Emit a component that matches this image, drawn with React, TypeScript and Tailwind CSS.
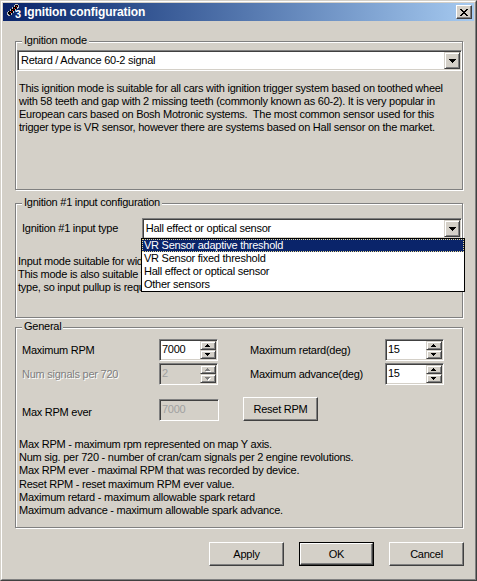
import React from "react";

const sunken =
  "border border-t-[#808080] border-l-[#808080] border-r-white border-b-white shadow-[inset_1px_1px_0_#404040,inset_-1px_-1px_0_#d4d0c8]";
const raised =
  "border border-t-white border-l-white border-r-[#404040] border-b-[#404040] shadow-[inset_-1px_-1px_0_#808080]";
const scrollBtn =
  "border border-t-[#d4d0c8] border-l-[#d4d0c8] border-r-[#404040] border-b-[#404040] shadow-[inset_1px_1px_0_#fff,inset_-1px_-1px_0_#808080] bg-[#d4d0c8]";
const etched = "relative border border-[#808080] shadow-[1px_1px_0_#fff,inset_1px_1px_0_#fff]";

function DownArrow() {
  return (
    <svg width="7" height="4" viewBox="0 0 7 4" shapeRendering="crispEdges">
      <path d="M0 0h7v1H0zM1 1h5v1H1zM2 2h3v1H2zM3 3h1v1H3z" fill="#000" />
    </svg>
  );
}

function SpinArrow({ up, disabled }: { up?: boolean; disabled?: boolean }) {
  const d = up ? "M2 0h1v1H2zM1 1h3v1H1zM0 2h5v1H0z" : "M0 0h5v1H0zM1 1h3v1H1zM2 2h1v1H2z";
  return (
    <svg width="6" height="4" viewBox="0 0 6 4" shapeRendering="crispEdges">
      {disabled && <path d={d} fill="#fff" transform="translate(1 1)" />}
      <path d={d} fill={disabled ? "#808080" : "#000"} />
    </svg>
  );
}

function Combo({ value, width }: { value: string; width: string }) {
  return (
    <div className={`${sunken} ${width} h-[21px] bg-white p-[1px] flex items-stretch`}>
      <div className="flex-1 pl-[2px] leading-[17px] text-black">{value}</div>
      <div className={`${scrollBtn} w-[16px] flex items-center justify-center`}>
        <DownArrow />
      </div>
    </div>
  );
}

function Spin({ value, disabled }: { value: string; disabled?: boolean }) {
  return (
    <div
      className={`${sunken} w-[59px] h-[22px] p-[1px] flex ${disabled ? "bg-[#d4d0c8]" : "bg-white"}`}
    >
      <div
        className={`flex-1 pl-[1px] leading-[16px] ${
          disabled ? "text-[#a0a0a0]" : "text-black"
        }`}
      >
        {value}
      </div>
      <div className="w-[16px] flex flex-col">
        <div className={`${scrollBtn} h-[9px] flex items-center justify-center`}>
          <SpinArrow up disabled={disabled} />
        </div>
        <div className={`${scrollBtn} h-[9px] flex items-center justify-center`}>
          <SpinArrow disabled={disabled} />
        </div>
      </div>
    </div>
  );
}

function Button({ label, isDefault, className = "" }: { label: string; isDefault?: boolean; className?: string }) {
  const inner = (
    <div className={`${raised} w-full h-full bg-[#d4d0c8] flex items-center justify-center`}>
      {label}
    </div>
  );
  if (isDefault) {
    return <div className={`border border-black ${className}`}>{inner}</div>;
  }
  return <div className={className}>{inner}</div>;
}

function Legend({ text }: { text: string }) {
  return (
    <span className="absolute left-[6px] -top-[8px] px-[2px] bg-[#d4d0c8] leading-[13px]">{text}</span>
  );
}

export default function App() {
  return (
    <div className="w-[477px] h-[581px] bg-[#d4d0c8] border border-t-[#d4d0c8] border-l-[#d4d0c8] border-r-[#404040] border-b-[#404040] font-['Liberation_Sans',Arial,sans-serif] text-[11px] tracking-[-0.25px] text-black select-none">
      <div className="w-full h-full border border-t-white border-l-white border-r-[#808080] border-b-[#808080] p-[1px] flex flex-col">
        {/* title bar */}
        <div className="h-[18px] flex items-center bg-gradient-to-r from-[#0a246a] to-[#a6caf0]">
          <div className="w-[16px] h-[16px] ml-[2px] relative">
            <svg width="16" height="16" viewBox="0 0 16 16" shapeRendering="crispEdges">
              <path d="M10 0h3v1h1v3h-1v1h-2v2h-2v2h-2v2h-2v1h-2v-1h-1v-3h1v-1h2v-2h2v-2h2v-2h1z" fill="#c0c0c0" />
              <path d="M10 1h3v2h-1v2h-2v2h-2v2h-2v2h-2v-1h-1v-2h1v-1h2v-2h2v-2h2v-2h1z" fill="#000" />
              <path d="M11 2h1v1h-1zM9 4h1v1h-1zM7 6h1v1h-1zM5 8h1v1h-1z" fill="#ff2020" />
            </svg>
            <span className="absolute left-[10px] top-[5px] text-white font-bold text-[11px] leading-[11px] tracking-normal">3</span>
          </div>
          <span className="ml-[3px] text-white font-bold text-[12px] tracking-[-0.1px] leading-[18px]">
            Ignition configuration
          </span>
          <div className={`${raised} ml-auto mr-[2px] w-[16px] h-[14px] bg-[#d4d0c8] flex items-center justify-center`}>
            <svg width="8" height="7" viewBox="0 0 8 7" shapeRendering="crispEdges">
              <path
                d="M0 0h2v1h-2zM6 0h2v1h-2zM1 1h2v1h-2zM5 1h2v1h-2zM2 2h4v1h-4zM3 3h2v1h-2zM2 4h4v1h-4zM1 5h2v1h-2zM5 5h2v1h-2zM0 6h2v1h-2zM6 6h2v1h-2z"
                fill="#000"
              />
            </svg>
          </div>
        </div>

        {/* body */}
        <div className="flex flex-col pl-[12px]">
          {/* Ignition mode */}
          <div className={`${etched} mt-[20px] w-[448px] h-[149px] pt-[8px] pl-[1px]`}>
            <Legend text="Ignition mode" />
            <Combo value="Retard / Advance 60-2 signal" width="w-[445px]" />
            <p className="mt-[11px] pl-[2px] leading-[13px] w-[440px]">
              This ignition mode is suitable for all cars with ignition trigger system based on toothed wheel
              with 58 teeth and gap with 2 missing teeth (commonly known as 60-2). It is very popular in
              European cars based on Bosh Motronic systems.&nbsp; The most common sensor used for this
              trigger type is VR sensor, however there are systems based on Hall sensor on the market.
            </p>
          </div>

          {/* Ignition #1 input configuration */}
          <div className={`${etched} mt-[13px] w-[448px] h-[115px] pt-[14px] pl-[1px]`}>
            <Legend text="Ignition #1 input configuration" />
            <div className="flex items-center">
              <span className="pl-[5px] w-[125px]">Ignition #1 input type</span>
              <Combo value="Hall effect or optical sensor" width="w-[321px]" />
            </div>
            <p className="mt-[16px] pl-[1px] leading-[13px] w-[440px]">
              Input mode suitable for wide range of Hall effect and optical sensors.
              <br />
              This mode is also suitable for other sensors with open collector output
              <br />
              type, so input pullup is required.
            </p>
            {/* open dropdown list */}
            <div className="absolute left-[125px] top-[34px] w-[324px] h-[54px] border border-black bg-white">
              <div className="h-[13px] bg-[#0a246a] text-white border border-dotted border-[#e8d890] pl-[1px] leading-[11px]">
                VR Sensor adaptive threshold
              </div>
              <div className="h-[13px] pl-[2px] leading-[13px]">VR Sensor fixed threshold</div>
              <div className="h-[13px] pl-[2px] leading-[13px]">Hall effect or optical sensor</div>
              <div className="h-[13px] pl-[2px] leading-[13px]">Other sensors</div>
            </div>
          </div>

          {/* General */}
          <div className={`${etched} mt-[9px] w-[448px] h-[201px] pt-[11px] pl-[1px]`}>
            <Legend text="General" />
            <div className="flex items-center pl-[5px]">
              <span className="w-[137px]">Maximum RPM</span>
              <Spin value="7000" />
              <span className="ml-[32px] w-[135px]">Maximum retard(deg)</span>
              <Spin value="15" />
            </div>
            <div className="flex items-center pl-[5px] mt-[2px]">
              <span className="w-[137px] text-[#808080] [text-shadow:1px_1px_0_#fff]">Num signals per 720</span>
              <Spin value="2" disabled />
              <span className="ml-[32px] w-[135px]">Maximum advance(deg)</span>
              <Spin value="15" />
            </div>
            <div className="flex items-end pl-[5px] mt-[12px]">
              <span className="w-[137px] leading-[13px] mb-[2px]">Max RPM ever</span>
              <div className={`${sunken} w-[60px] h-[22px] bg-[#d4d0c8] pl-[2px] leading-[18px] text-[#a0a0a0]`}>
                7000
              </div>
              <Button label="Reset RPM" className="ml-[24px] w-[75px] h-[24px]" />
            </div>
            <p className="mt-[17px] pl-[2px] leading-[13.2px]">
              Max RPM - maximum rpm represented on map Y axis.
              <br />
              Num sig. per 720 - number of cran/cam signals per 2 engine revolutions.
              <br />
              Max RPM ever - maximal RPM that was recorded by device.
              <br />
              Reset RPM - reset maximum RPM ever value.
              <br />
              Maximum retard - maximum allowable spark retard
              <br />
              Maximum advance - maximum allowable spark advance.
            </p>
          </div>

          {/* dialog buttons */}
          <div className="flex mt-[14px] pl-[194px] gap-[15px]">
            <Button label="Apply" className="w-[75px] h-[24px]" />
            <Button label="OK" isDefault className="w-[75px] h-[24px]" />
            <Button label="Cancel" className="w-[75px] h-[24px]" />
          </div>
        </div>
      </div>
    </div>
  );
}
